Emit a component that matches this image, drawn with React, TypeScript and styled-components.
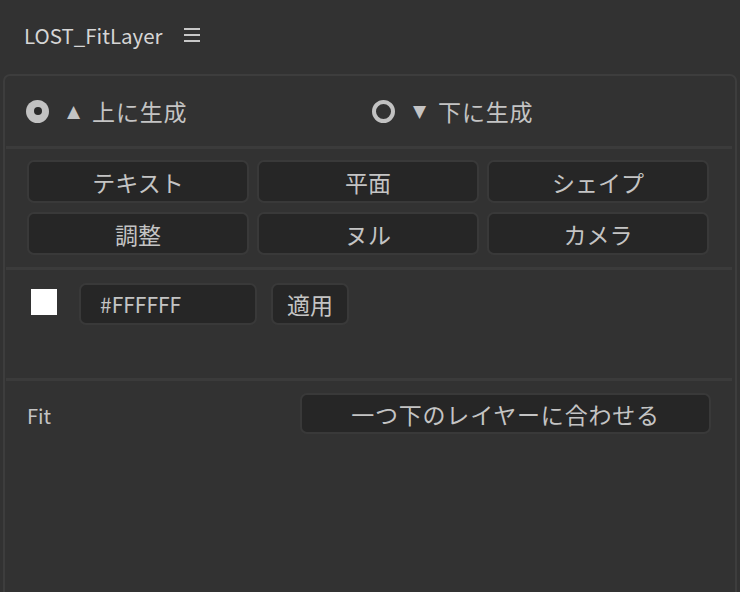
import styled, { createGlobalStyle } from "styled-components";

const GlobalStyle = createGlobalStyle`
  html, body {
    margin: 0;
    padding: 0;
    background: #323232;
  }
  body {
    font-family: "Noto Sans CJK JP", "Noto Sans", sans-serif;
    color: #c4c4c4;
    overflow: hidden;
  }
`;

const Header = styled.div`
  height: 74px;
  display: flex;
  align-items: center;
  padding: 0 0 4px 24px;
  box-sizing: border-box;
`;

const Title = styled.span`
  font-size: 20.5px;
  color: #d6d6d6;
`;

const MenuIcon = styled.svg`
  margin-left: 21px;
  width: 16px;
  height: 14px;
`;

const Panel = styled.div`
  margin: 0 3px 0 3px;
  height: 518px;
  box-sizing: border-box;
  border: 2px solid #3d3d3d;
  border-bottom: 0;
  border-radius: 7px 7px 0 0;
  padding: 0 3px 0 1px;
`;

const RadioRow = styled.div`
  height: 70px;
  display: grid;
  grid-template-columns: 346px 1fr;
  align-items: center;
  padding-left: 20px;
`;

const RadioOption = styled.label`
  display: flex;
  align-items: center;
  font-size: 23px;
  letter-spacing: 0.8px;
  color: #c4c4c4;
`;

const RadioDot = styled.span<{ $checked?: boolean }>`
  width: 23px;
  height: 23px;
  border-radius: 50%;
  box-sizing: border-box;
  display: flex;
  align-items: center;
  justify-content: center;
  background: ${(p) => (p.$checked ? "#c2c2c2" : "transparent")};
  border: ${(p) => (p.$checked ? "none" : "4px solid #c2c2c2")};

  &::after {
    content: "";
    display: ${(p) => (p.$checked ? "block" : "none")};
    width: 8px;
    height: 8px;
    border-radius: 50%;
    background: #2a2a2a;
  }
`;

const Arrow = styled.span`
  margin: 0 12px 0 18px;
  font-family: "DejaVu Sans", sans-serif;
  font-size: 17px;
  letter-spacing: 0;
  color: #c4c4c4;
`;

const Divider = styled.div`
  height: 3px;
  background: #3b3b3b;
`;

const ButtonGrid = styled.div`
  display: grid;
  grid-template-columns: repeat(3, 1fr);
  gap: 9px 8px;
  padding: 11px 23px 12px 21px;
`;

const Button = styled.button`
  height: 43px;
  box-sizing: border-box;
  background: #262626;
  border: 2px solid #393939;
  border-radius: 7px;
  color: #c4c4c4;
  font-family: "Noto Sans CJK JP", "Noto Sans", sans-serif;
  font-size: 23px;
  padding: 0;
  display: flex;
  align-items: center;
  justify-content: center;
`;

const ColorRow = styled.div`
  height: 108px;
  box-sizing: border-box;
  padding: 13px 0 0 25px;
  display: flex;
  align-items: flex-start;
`;

const Swatch = styled.div<{ $color: string }>`
  width: 26px;
  height: 26px;
  margin-top: 6px;
  background: ${(p) => p.$color};
`;

const HexInput = styled.div`
  margin-left: 22px;
  width: 178px;
  height: 42px;
  box-sizing: border-box;
  background: #262626;
  border: 2px solid #393939;
  border-radius: 7px;
  padding-left: 19px;
  display: flex;
  align-items: center;
  font-size: 21px;
  color: #c4c4c4;
`;

const ApplyButton = styled(Button)`
  margin-left: 14px;
  width: 78px;
  height: 42px;
`;

const FitRow = styled.div`
  display: flex;
  align-items: center;
  justify-content: space-between;
  padding: 12px 21px 0 21px;
`;

const FitLabel = styled.span`
  font-size: 20px;
  color: #c4c4c4;
  margin-top: 4px;
`;

const FitButton = styled(Button)`
  width: 411px;
  height: 41px;
  letter-spacing: 0.8px;
`;

const layerButtons = ["テキスト", "平面", "シェイプ", "調整", "ヌル", "カメラ"];

export default function App() {
  return (
    <>
      <GlobalStyle />
      <Header>
        <Title>LOST_FitLayer</Title>
        <MenuIcon viewBox="0 0 16 14">
          <rect x="0" y="0" width="16" height="2" fill="#c8c8c8" />
          <rect x="0" y="6" width="16" height="2" fill="#c8c8c8" />
          <rect x="0" y="12" width="16" height="2" fill="#c8c8c8" />
        </MenuIcon>
      </Header>
      <Panel>
        <RadioRow>
          <RadioOption>
            <RadioDot $checked />
            <Arrow>▲</Arrow>上に生成
          </RadioOption>
          <RadioOption>
            <RadioDot />
            <Arrow>▼</Arrow>下に生成
          </RadioOption>
        </RadioRow>
        <Divider />
        <ButtonGrid>
          {layerButtons.map((label) => (
            <Button key={label}>{label}</Button>
          ))}
        </ButtonGrid>
        <Divider />
        <ColorRow>
          <Swatch $color="#ffffff" />
          <HexInput>#FFFFFF</HexInput>
          <ApplyButton>適用</ApplyButton>
        </ColorRow>
        <Divider />
        <FitRow>
          <FitLabel>Fit</FitLabel>
          <FitButton>一つ下のレイヤーに合わせる</FitButton>
        </FitRow>
      </Panel>
    </>
  );
}
